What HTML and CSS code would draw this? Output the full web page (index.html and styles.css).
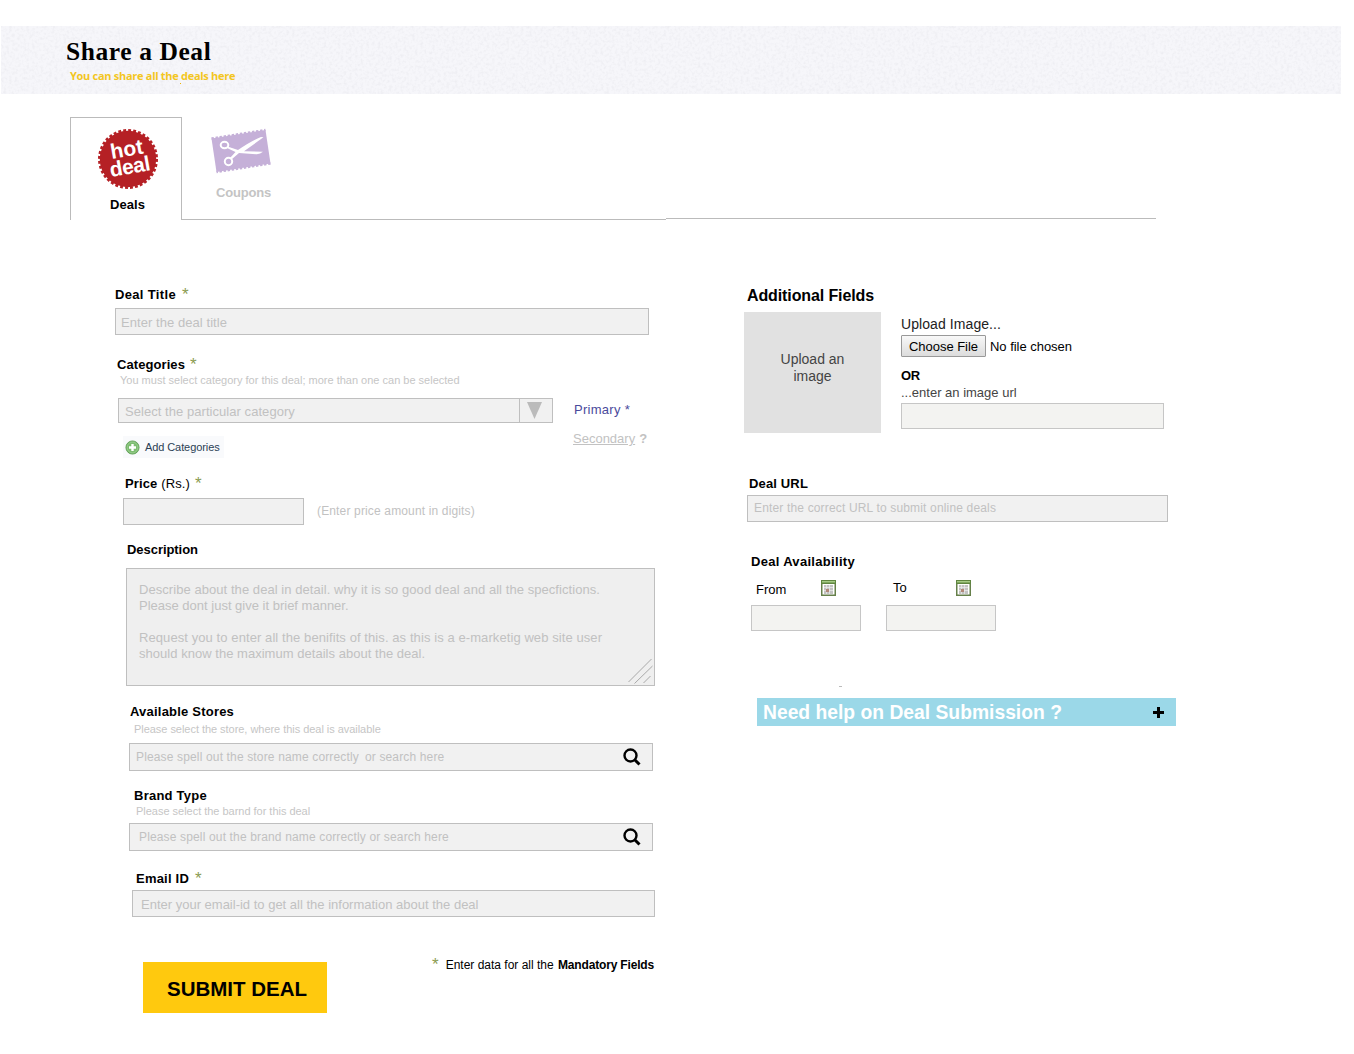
FILE: index.html
```html
<!DOCTYPE html>
<html lang="en">
<head>
<meta charset="utf-8">
<title>Share a Deal</title>
<link rel="stylesheet" href="styles.css">
</head>
<body>
<header class="banner">
  <svg class="banner-texture" width="1340" height="68" aria-hidden="true">
    <filter id="paper" x="0" y="0" width="100%" height="100%">
      <feTurbulence type="fractalNoise" baseFrequency="0.35" numOctaves="2" seed="4"/>
      <feColorMatrix type="matrix" values="0 0 0 0 0.82  0 0 0 0 0.82  0 0 0 0 0.86  1.6 0 0 0 -0.68"/>
    </filter>
    <rect width="1340" height="68" filter="url(#paper)"/>
  </svg>
  <h1 class="title">Share a Deal</h1>
  <p class="tagline">You can share all the deals here</p>
  <i class="banner-dot"></i>
</header>

<nav class="tabs">
  <a class="tab tab-active">
    <svg width="62" height="62" viewBox="-31 -31 62 62">
      <circle r="28.2" fill="#b52025"/>
      <circle r="28.6" fill="none" stroke="#b52025" stroke-width="2.800" stroke-dasharray="2.9 2.091"/>
      <g transform="rotate(-10)" fill="#fff" font-family="Liberation Sans, Arial, sans-serif" font-weight="bold" text-anchor="middle">
        <text x="0.500" y="-2.800" font-size="21" textLength="33">hot</text>
        <text x="0.500" y="14.800" font-size="21" textLength="41">deal</text>
      </g>
    </svg>
    <span class="tab-name">Deals</span>
  </a>
  <a class="tab tab-coupons">
    <svg width="64" height="48" viewBox="0 0 64 48">
      <path d="M1.500 11.500L55.500 3L60.500 36.500L6.500 45Z" fill="#c5b0d8"/>
      <path d="M1.500 11.500L55.500 3M60.500 36.500L6.500 45" stroke="#c5b0d8" stroke-width="2.400" stroke-dasharray="2.400 1.700"/>
      <g fill="none" stroke="#fff" stroke-width="2"><ellipse cx="14.500" cy="18" rx="3.800" ry="3.200"/><ellipse cx="18.500" cy="34.500" rx="3.700" ry="3.700"/></g>
      <path d="M17.500 19.500L28 23Q41 14 51 10L53.500 10.300L34 24.300L53 24.800Q50 27.500 46 27.200L29 26L21.500 32.500L20 31L25.500 25L17 21Z" fill="#fff"/>
    </svg>
    <span class="tab-name">Coupons</span>
  </a>
  <span class="tab-rule"></span>
</nav>

<main class="form">
  <section class="main-fields">
    <div class="label l-title"><span>Deal Title</span><b class="star s-title">*</b></div>
    <div class="field f-title">Enter the deal title</div>

    <div class="label l-cat"><span>Categories</span><b class="star s-cat">*</b></div>
    <div class="hint h-cat">You must select category for this deal; more than one can be selected</div>
    <div class="cat-row">
      <div>
        <div class="field select"><span>Select the particular category</span>
          <span class="arrow"><svg width="15" height="17"><path d="M0 0H15L7.500 17Z" fill="#bbb"/></svg></span>
        </div>
        <div class="add">
          <svg width="15" height="15" viewBox="0 0 15 15"><circle cx="7.500" cy="7.500" r="6.600" fill="#69b25c" stroke="#5c9a52" stroke-width=".8"/><circle cx="7.500" cy="7.500" r="5.500" fill="#7dbd70" stroke="#b5dcac" stroke-width=".6"/><path d="M7.500 4V11M4 7.500H11" stroke="#fff" stroke-width="2.400"/></svg>
          <span>Add Categories</span>
        </div>
      </div>
      <div class="kinds">
        <div class="primary">Primary *</div>
        <div class="secondary"><u>Secondary</u><b>?</b></div>
      </div>
    </div>

    <div class="label l-price"><span>Price <em>(Rs.)</em></span><b class="star s-cat">*</b></div>
    <div class="price-row"><div class="field f-price"></div><span class="price-hint">(Enter price amount in digits)</span></div>

    <div class="label l-desc">Description</div>
    <div class="textarea">
      <p>Describe about the deal in detail. why it is so good deal and all the specfictions.</p>
      <p class="line-2">Please dont just give it brief manner.</p>
      <p>&nbsp;</p>
      <p class="line-4">Request you to enter all the benifits of this. as this is a e-marketig web site user</p>
      <p class="line-5">should know the maximum details about the deal.</p>
      <svg class="grip" width="26" height="27"><path d="M1.500 25L24.500 2M7.500 26.500L25.500 9M16.500 26L23.500 19" stroke="#a9a9a9" fill="none"/></svg>
    </div>

    <div class="label l-store">Available Stores</div>
    <div class="hint h-store">Please select the store, where this deal is available</div>
    <div class="field search f-store"><span>Please spell out the store name correctly</span><span class="store-b">or search here</span>
      <svg class="lens" width="18" height="18"><circle cx="7.500" cy="7.500" r="6" fill="none" stroke="#000" stroke-width="2.400"/><path d="M11.500 11.500L16.500 16.500" stroke="#000" stroke-width="3"/></svg></div>

    <div class="label l-brand">Brand Type</div>
    <div class="hint h-brand">Please select the barnd for this deal</div>
    <div class="field search f-brand"><span>Please spell out the brand name correctly or search here</span>
      <svg class="lens" width="18" height="18"><circle cx="7.500" cy="7.500" r="6" fill="none" stroke="#000" stroke-width="2.400"/><path d="M11.500 11.500L16.500 16.500" stroke="#000" stroke-width="3"/></svg></div>

    <div class="label l-email"><span>Email ID</span><b class="star s-title">*</b></div>
    <div class="field f-email">Enter your email-id to get all the information about the deal</div>

    <div class="finish">
      <button class="submit">SUBMIT DEAL</button>
      <p class="note"><b class="star">*</b><span>Enter data for all the </span><strong>Mandatory Fields</strong></p>
    </div>
  </section>

  <section class="extra-fields">
    <h2 class="extra-title">Additional Fields</h2>
    <div class="upload">
      <div class="preview"><span>Upload an</span><span>image</span></div>
      <div class="upload-side">
        <div class="up-title">Upload Image...</div>
        <div class="file"><span class="choose">Choose File</span><span>No file chosen</span></div>
        <div class="or">OR</div>
        <div class="up-url">...enter an image url</div>
        <div class="field f-image"></div>
      </div>
    </div>

    <div class="label l-url">Deal URL</div>
    <div class="field f-url">Enter the correct URL to submit online deals</div>

    <div class="label l-avail">Deal Availability</div>
    <div class="dates">
      <div class="date">
        <div class="date-head"><span class="from">From</span>
          <svg class="cal" width="15" height="16"><path d="M.75 .75H14.250V15.250H.75Z" fill="#fff" stroke="#66804a" stroke-width="1.500"/><path d="M0 0H15V4H0Z" fill="#5f853f"/><path d="M1 1H14V2.500H1Z" fill="#a5cb85"/><path d="M3 5H12V14H3Z" fill="#c3c3c3"/><path d="M3 7.500H12M3 10.500H12M5.500 5V14M8.500 5V14" stroke="#eee" stroke-width=".7"/><path d="M5 9H8V12H5Z" fill="#b28878"/></svg></div>
        <div class="field f-date"></div>
      </div>
      <div class="date">
        <div class="date-head"><span class="to">To</span>
          <svg class="cal" width="15" height="16"><path d="M.75 .75H14.250V15.250H.75Z" fill="#fff" stroke="#66804a" stroke-width="1.500"/><path d="M0 0H15V4H0Z" fill="#5f853f"/><path d="M1 1H14V2.500H1Z" fill="#a5cb85"/><path d="M3 5H12V14H3Z" fill="#c3c3c3"/><path d="M3 7.500H12M3 10.500H12M5.500 5V14M8.500 5V14" stroke="#eee" stroke-width=".7"/><path d="M5 9H8V12H5Z" fill="#b28878"/></svg></div>
        <div class="field f-date"></div>
      </div>
    </div>
    <div class="speck"></div>
    <div class="help"><span>Need help on Deal Submission ?</span><svg width="11" height="11"><path d="M5.500 0V11M0 5.500H11" stroke="#000" stroke-width="3"/></svg></div>
  </section>
</main>
</body>
</html>
```
FILE: styles.css
```css
* { box-sizing: border-box; }
body { margin: 0; width: 1354px; height: 1054px; overflow: hidden; background: #fff; color: #000; font: 13px/16px "Liberation Sans", Arial, sans-serif; }
h1, h2, p { margin: 0; font-weight: normal; }
span, u, strong { white-space: pre; }
svg { display: block; flex: none; }

.banner { position: relative; width: 1340px; height: 68px; margin: 26px 0 0 1px; padding: 9px 0 0 65px; background: #f6f6fa; }
.banner-texture { position: absolute; left: 0; top: 0; }
.title { position: relative; font: bold 25.5px/34px "Liberation Serif", "Times New Roman", serif; letter-spacing: .58px; }
.tagline { position: relative; padding-left: 4px; font: bold 11px/14px "Open Sans", sans-serif; letter-spacing: -.29px; color: #f3c61f; }
.banner-dot { position: absolute; left: 179px; top: 57px; width: 1px; height: 1px; background: #f0b400; }

.tabs { display: flex; height: 103px; margin: 23px 0 0 70px; }
.tab-active { display: flex; flex-direction: column; align-items: center; width: 112px; height: 103px; padding: 10px 0 0 4px; border: 1px solid #bbb; border-bottom: 0; }
.tab-name { font-weight: bold; }
.tab-active .tab-name { margin: 7px 1px 0 0; letter-spacing: .06px; }
.tab-coupons { width: 484px; border-bottom: 1px solid #bbb; padding: 10px 0 0 28px; color: #c4c4c4; }
.tab-coupons .tab-name { display: inline-block; margin: 10px 0 0 6px; letter-spacing: -.19px; }
.tab-rule { width: 490px; height: 102px; border-bottom: 1px solid #bbb; }

.form { display: flex; padding: 66px 0 0 115px; }
.main-fields { width: 629px; padding-top: 1px; }
.extra-fields { width: 460px; padding-top: 1px; }
.label { display: flex; height: 16px; font-weight: bold; }
.label em { font-style: normal; font-weight: normal; }
.star { color: #8b9c52; font-size: 17px; line-height: 16px; font-weight: normal; letter-spacing: 0; }
.s-title { margin-left: 6px; }
.s-cat { margin-left: 5px; }
.hint { height: 14px; font-size: 11px; line-height: 14px; color: #c6c6c6; }
.field { display: flex; align-items: center; border: 1px solid #bfbfbf; background: #f1f1f1; color: #c1c1c1; font-size: 12px; }

.l-title { letter-spacing: .34px; }
.f-title { width: 534px; height: 27px; margin-top: 5px; padding: 2px 0 0 5px; font-size: 13px; letter-spacing: .06px; }
.l-cat { margin: 22px 0 0 2px; letter-spacing: .08px; }
.h-cat { margin-left: 5px; }
.cat-row { display: flex; margin: 11px 0 0 3px; height: 78px; }
.select { width: 435px; height: 25px; padding: 2px 0 0 6px; justify-content: space-between; font-size: 13px; letter-spacing: .05px; }
.arrow { width: 33px; height: 23px; margin-top: -2px; padding: 3px 0 0 7px; border-left: 1px solid #bfbfbf; }
.add { display: flex; align-items: center; gap: 5px; width: 101px; height: 22px; margin: 13px 0 0 5px; padding-left: 2px; background: #f9fafc; color: #2b3f55; font-size: 11px; letter-spacing: -.09px; }
.kinds { padding-left: 20px; }
.primary { margin: 4px 0 0 1px; color: #4a4a9c; letter-spacing: .28px; }
.secondary { display: flex; margin-top: 13px; color: #c2c2c2; }
.secondary b { margin-left: 4px; }
.l-price { margin-left: 10px; letter-spacing: .13px; }
.price-row { display: flex; margin: 6px 0 0 8px; }
.f-price { width: 181px; height: 27px; }
.price-hint { margin: 5px 0 0 13px; font-size: 12px; letter-spacing: .15px; color: #c2c2c2; }
.l-desc { margin: 17px 0 0 12px; letter-spacing: -.05px; }
.textarea { position: relative; width: 529px; height: 118px; margin: 10px 0 0 11px; padding: 13px 0 0 12px; border: 1px solid #bfbfbf; background: #efefef; color: #c1c1c1; font-size: 13px; letter-spacing: .06px; white-space: nowrap; }
.line-2 { letter-spacing: 0; }
.line-4 { letter-spacing: .085px; }
.line-5 { letter-spacing: .03px; }
.grip { position: absolute; right: 1px; bottom: 1px; }
.l-store { margin: 18px 0 0 15px; letter-spacing: .21px; }
.h-store { margin: 2px 0 0 19px; letter-spacing: -.04px; }
.search { width: 524px; height: 28px; margin-left: 14px; padding-right: 11px; letter-spacing: .15px; }
.f-store { margin-top: 7px; padding-left: 6px; }
.store-b { margin-left: 6px; }
.lens { margin-left: auto; }
.l-brand { margin: 17px 0 0 19px; letter-spacing: .24px; }
.h-brand { margin-left: 21px; letter-spacing: -.02px; }
.f-brand { margin-top: 5px; padding-left: 9px; }
.l-email { margin: 20px 0 0 21px; letter-spacing: .21px; }
.f-email { width: 523px; height: 27px; margin: 3px 0 0 17px; padding: 2px 0 0 8px; font-size: 13px; }
.finish { display: flex; width: 560px; margin: 45px 0 0 28px; }
.submit { width: 184px; height: 51px; border: 0; padding: 3px 0 0 4px; background: #ffc90e; color: #000; font: bold 20.5px/24px "Liberation Sans", Arial, sans-serif; }
.note { display: flex; margin: -5px 0 0 105px; font-size: 12px; }
.note .star { margin-right: 7px; }
.note strong { margin-left: 1px; letter-spacing: -.17px; }

.extra-title { height: 18px; padding-left: 3px; font: bold 16px/18px "Liberation Sans", Arial, sans-serif; letter-spacing: -.11px; }
.upload { display: flex; gap: 20px; margin-top: 7px; }
.preview { display: flex; flex-direction: column; align-items: center; width: 137px; height: 121px; padding-top: 39px; background: #e1e1e1; color: #444; font-size: 14px; line-height: 17px; }
.up-title { height: 16px; margin-top: 4px; font-size: 14px; letter-spacing: .08px; color: #222; }
.file { display: flex; align-items: center; gap: 4px; height: 22px; margin-top: 3px; padding-top: 1px; letter-spacing: -.03px; }
.choose { display: flex; align-items: center; justify-content: center; width: 85px; height: 22px; margin-top: -1px; padding-top: 1px; border: 1px solid #999; border-radius: 1px; background: linear-gradient(#f8f8f8, #dcdcdc); }
.or { margin-top: 11px; font-weight: bold; letter-spacing: -.25px; }
.up-url { margin-top: 1px; font-size: 13px; color: #444; }
.f-image { width: 263px; height: 26px; margin-top: 2px; background: #f3f3f1; border-color: #c6c6c6; }
.l-url { margin: 43px 0 0 5px; letter-spacing: .15px; }
.f-url { width: 421px; height: 27px; margin: 3px 0 0 3px; padding: 0 0 1px 6px; letter-spacing: .16px; }
.l-avail { margin: 32px 0 0 7px; letter-spacing: .31px; }
.dates { display: flex; gap: 25px; margin: 10px 0 0 7px; }
.date { width: 110px; }
.date-head { display: flex; justify-content: space-between; height: 25px; padding-right: 25px; }
.from { margin: 2px 0 0 5px; }
.to { margin-left: 7px; }
.f-date { height: 26px; background: #f3f3f1; border-color: #c6c6c6; }
.speck { width: 3px; height: 1px; margin: 55px 0 0 95px; background: #bbb; }
.help { display: flex; align-items: center; justify-content: space-between; width: 419px; height: 28px; margin: 11px 0 0 13px; padding: 1px 12px 0 6px; background: #9bd8e8; color: #fff; font: bold 19.3px/24px "Liberation Sans", Arial, sans-serif; }
.help span { padding-top: 1px; }
```
